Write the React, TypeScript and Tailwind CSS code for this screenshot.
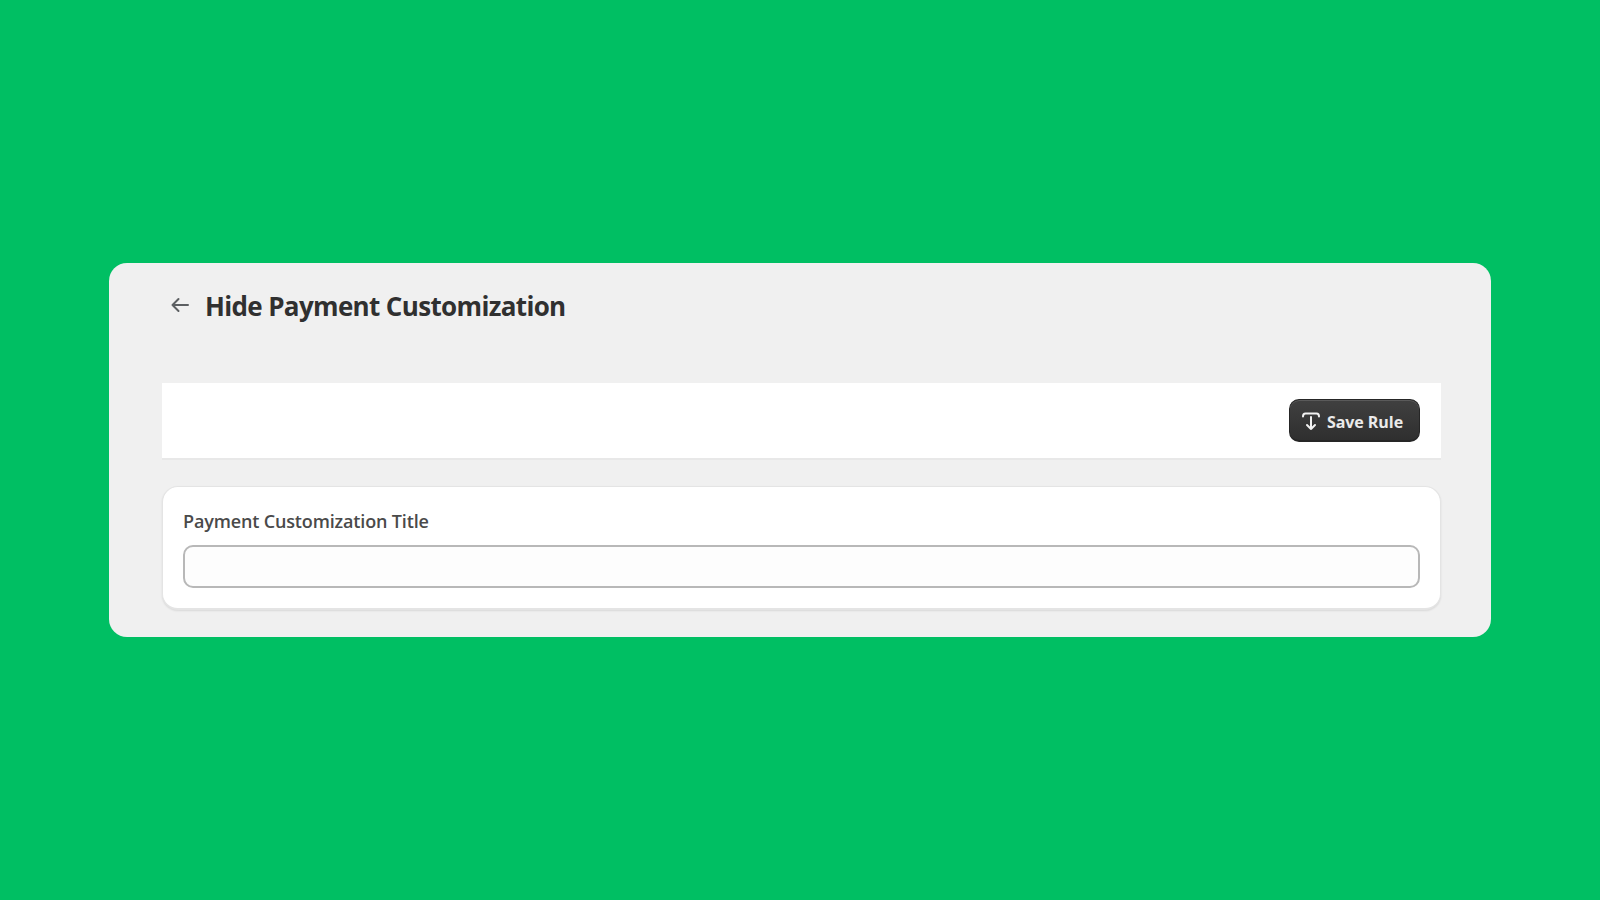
export default function App() {
  return (
    <div className="w-full h-[900px] bg-[#00bf63] flex flex-col pt-[263px] pl-[109px] font-['Open_Sans','Noto_Sans',sans-serif]">
      <div className="w-[1382px] h-[374px] rounded-[18px] bg-[#f0f0f0] flex flex-col pl-[53px] pr-[50px]">
        <div className="h-[120px] flex items-start pt-[22px]">
          <div className="flex items-center h-[42px] pl-[8px] gap-[14px]">
            <svg width="20" height="20" viewBox="0 0 20 20" fill="none" stroke="#5c5f62" strokeWidth="2" strokeLinecap="round" strokeLinejoin="round" className="-mt-[3px]">
              <path d="M18 10H2.500M8.500 4 2.500 10l6 6" />
            </svg>
            <h1 className="text-[26px] leading-[42px] font-bold text-[#303030] tracking-[-0.65px] ml-px">Hide Payment Customization</h1>
          </div>
        </div>
        <div className="h-[77px] bg-white border-b-2 border-[#e8e8e8] flex items-center justify-end pr-[21px]">
          <button className="w-[131px] h-[43px] rounded-[10px] bg-gradient-to-b from-[#404040] to-[#2f2f2f] border border-[#262626] border-b-2 shadow-[inset_0_1px_0_#5a5a5a] flex items-center justify-center gap-[6px] text-white/90 text-[16px] font-bold tracking-[-0.05px]">
            <svg width="20" height="20" viewBox="0 0 20 20" fill="none" stroke="#f2f2f2" strokeWidth="2" strokeLinecap="round" strokeLinejoin="round" className="-ml-[5px] mt-[1px]">
              <path d="M2 5.500C2 3.500 3 2.500 4.500 2.500h11c1.500 0 2.500 1 2.500 3M10 6v12M6 14l4 4 4-4" />
            </svg>
            <span className="mt-[3px]">Save Rule</span>
          </button>
        </div>
        <div className="mt-[26px] h-[124px] bg-white rounded-[16px] border border-[#e4e4e4] border-b-2 shadow-[0_1px_2px_rgba(0,0,0,0.1)] px-[20px] pt-[20px]">
          <label className="block text-[18px] leading-[28px] font-semibold text-[#4a4a4a] tracking-[-0.15px]">Payment Customization Title</label>
          <input type="text" className="block mt-[10px] w-full h-[43px] rounded-[10px] bg-[#fdfdfd] border-2 border-[#b8b8b8] outline-none" />
        </div>
      </div>
    </div>
  );
}
